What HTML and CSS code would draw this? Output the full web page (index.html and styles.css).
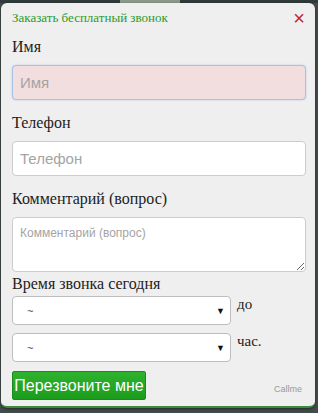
FILE: index.html
```html
<!doctype html>
<html>
    <head>
        <title>Callme</title>
        <link rel="stylesheet" href="styles.css">
    </head>
    <body>
        <div class="backdrop">
            <div class="callme-box">
                <div class="callme-head">
                    <span class="callme-title">Заказать бесплатный звонок</span>
                    <span class="callme-close">&times;</span>
                </div>

                <label class="field-label">Имя</label>
                <input class="field field-error" type="text" placeholder="Имя">

                <label class="field-label">Телефон</label>
                <input class="field" type="text" placeholder="Телефон">

                <label class="field-label">Комментарий (вопрос)</label>
                <textarea class="field field-area" placeholder="Комментарий (вопрос)"></textarea>

                <label class="field-label label-time">Время звонка сегодня</label>
                <div class="time-row">
                    <div class="select-box"><span>~</span><span class="arrow">&#9660;</span></div>
                    <span class="time-word">до</span>
                </div>
                <div class="time-row">
                    <div class="select-box"><span>~</span><span class="arrow">&#9660;</span></div>
                    <span class="time-word">час.</span>
                </div>

                <div class="callme-foot">
                    <button class="call-btn">Перезвоните мне</button>
                    <span class="callme-brand">Callme</span>
                </div>
            </div>
        </div>
    </body>
</html>
```
FILE: styles.css
```css
html, body {
    margin: 0;
    padding: 0;
}

body {
    width: 318px;
    height: 413px;
    overflow: hidden;
    background: #3c4646;
}

.backdrop {
    padding: 3px 3px 5px 1px;
    height: 405px;
    background: linear-gradient(to right, #2f3a3a 0, #2f3a3a 120px, #8a9a8a 120px, #8a9a8a 180px, #2f3a3a 180px);
    background-size: 100% 3px;
    background-repeat: no-repeat;
    background-color: #434c4c;
}

.callme-box {
    background: #efefef;
    border-radius: 6px;
    border-bottom: 2px solid #3c8a3c;
    box-shadow: 0 1px 3px rgba(0,0,0,0.5);
    height: 405px;
    box-sizing: border-box;
    padding: 0 9px 0 11px;
    font-family: "Liberation Serif", "DejaVu Serif", serif;
}

.callme-head {
    display: flex;
    justify-content: space-between;
    align-items: center;
    height: 30px;
}

.callme-title {
    color: #2b9a2b;
    font-size: 13px;
}

.callme-close {
    color: #c0262c;
    font-family: "Liberation Sans", Arial, sans-serif;
    font-size: 20px;
    line-height: 20px;
    margin-right: 1px;
}

.field-label {
    display: block;
    font-size: 16px;
    color: #222;
    margin: 5px 0 9px;
    line-height: 18px;
}

.field {
    display: block;
    width: 100%;
    box-sizing: border-box;
    height: 35px;
    border: 1px solid #cccccc;
    border-radius: 4px;
    background: #fff;
    padding: 0 7px;
    font-family: "Liberation Sans", Arial, sans-serif;
    font-size: 15px;
    color: #555;
    margin: 0 0 14px;
    outline: none;
}

.field::placeholder {
    color: #a4a4a4;
}

.field-error {
    background: #f2dede;
    border-color: #a9c1e3;
    box-shadow: 0 0 2px rgba(102,150,220,0.4);
}

.field-area {
    height: 55px;
    padding: 8px 7px;
    font-size: 12px;
    resize: vertical;
    margin-bottom: 3px;
}

.label-time {
    margin: 0 0 3px;
}

.time-row {
    display: flex;
    align-items: flex-start;
    margin-bottom: 8px;
}

.select-box {
    width: 219px;
    height: 29px;
    box-sizing: border-box;
    background: #fff;
    border: 1px solid #bdbdbd;
    border-radius: 4px;
    display: flex;
    justify-content: space-between;
    align-items: center;
    padding: 0 5px 0 14px;
    font-family: "Liberation Sans", Arial, sans-serif;
    font-size: 11px;
    color: #444;
}

.arrow {
    font-size: 9px;
    color: #111;
}

.time-word {
    margin-left: 6px;
    font-size: 15px;
    color: #222;
    line-height: 16px;
}

.callme-foot {
    display: flex;
    justify-content: space-between;
    align-items: flex-end;
    margin-top: 9px;
}

.call-btn {
    width: 134px;
    height: 29px;
    border: 1px solid #1e8a1e;
    border-radius: 2px;
    background: linear-gradient(#2eb22e, #1c9c1c);
    color: #fff;
    font-family: "Liberation Sans", Arial, sans-serif;
    font-size: 16px;
    padding: 0;
}

.callme-brand {
    font-family: "Liberation Sans", Arial, sans-serif;
    font-size: 9px;
    color: #999;
    margin: 0 4px 6px 0;
}
```
